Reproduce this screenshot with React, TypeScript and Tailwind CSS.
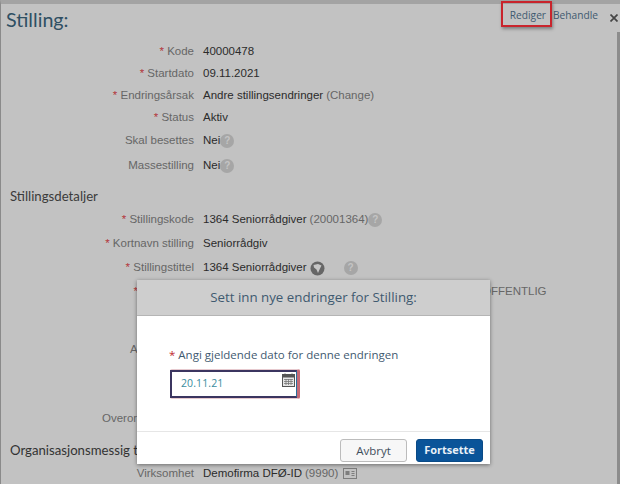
const sans = "font-['Liberation_Sans',Arial,sans-serif]";
const open = "font-['Open_Sans',sans-serif]";
const lato = "font-['Lato',sans-serif]";

type Row = {
  h: string;
  label?: string;
  req?: boolean;
  value?: string;
  muted?: string;
  icon?: 'help' | 'globe' | 'card';
  far?: boolean;
};

function Help({ className = '' }: { className?: string }) {
  return (
    <span
      className={`inline-flex h-[14px] w-[14px] items-center justify-center rounded-full bg-[#a6a6a6] text-[10px] font-bold leading-none text-[#c4c4c4] ${className}`}
    >
      ?
    </span>
  );
}

function Globe() {
  return (
    <svg width="15" height="15" viewBox="0 0 15 15" className="ml-[3px]">
      <circle cx="7.5" cy="7.5" r="7" fill="#666" />
      <path d="M3.5 4 L8 3 L11.5 4.5 L10 7.5 L8 12 L6.5 8.5 L4 6.5 Z" fill="#c6c6c6" />
    </svg>
  );
}

function CardIcon() {
  return (
    <svg width="14" height="11" viewBox="0 0 14 11" className="ml-[5px]">
      <rect x="0.5" y="0.5" width="13" height="10" fill="none" stroke="#7d7d7d" />
      <rect x="2.5" y="3" width="4" height="4" fill="#7d7d7d" />
      <path d="M8.5 3.5 H11.5 M8.5 5.5 H11.5 M8.5 7.5 H11.5" stroke="#7d7d7d" />
    </svg>
  );
}

function FormRow({ row }: { row: Row }) {
  return (
    <div className={`flex items-center text-[11.5px] ${row.h}`}>
      <div className={`w-[193px] shrink-0 text-right text-[#666] ${row.far ? 'pr-[56px]' : ''}`}>
        {row.req && <span className="text-[#b3353b]">* </span>}
        {row.label}
      </div>
      {row.value && (
        <div className={`flex items-center whitespace-nowrap pl-[9px] text-[#2b2b2b] ${row.far ? 'ml-[279px] text-[#666]' : ''}`}>
          {row.value}
          {row.muted && <span className="ml-[3px] text-[#666]">{row.muted}</span>}
          {row.icon === 'help' && <Help />}
          {row.icon === 'globe' && (
            <>
              <Globe />
              <Help className="ml-[19px]" />
            </>
          )}
          {row.icon === 'card' && <CardIcon />}
        </div>
      )}
    </div>
  );
}

// labels cut off by the dialog: only the part left of it is visible
function CutLabel({ h, pad, text }: { h: string; pad: string; text: string }) {
  return <div className={`flex items-center text-[11.5px] text-[#666] ${h} ${pad}`}>{text}</div>;
}

const top: Row[] = [
  { h: 'h-[22px]', label: 'Kode', req: true, value: '40000478' },
  { h: 'h-[22px]', label: 'Startdato', req: true, value: '09.11.2021' },
  { h: 'h-[22px]', label: 'Endringsårsak', req: true, value: 'Andre stillingsendringer', muted: '(Change)' },
  { h: 'h-[22px]', label: 'Status', req: true, value: 'Aktiv' },
  { h: 'h-[24px]', label: 'Skal besettes', value: 'Nei', icon: 'help' },
  { h: 'h-[25px]', label: 'Massestilling', value: 'Nei', icon: 'help' },
];

const details: Row[] = [
  { h: 'h-[25px]', label: 'Stillingskode', req: true, value: '1364 Seniorrådgiver', muted: '(20001364)', icon: 'help' },
  { h: 'h-[24px]', label: 'Kortnavn stilling', req: true, value: 'Seniorrådgiv' },
  { h: 'h-[24px]', label: 'Stillingstittel', req: true, value: '1364 Seniorrådgiver', icon: 'globe' },
  { h: 'h-[24px]', req: true, value: 'OFFENTLIG', far: true },
];

export default function App() {
  return (
    <div className={`relative h-[485px] w-[620px] overflow-hidden bg-white ${sans}`}>
      <div className="flex h-[484px] flex-col border-l border-t-[4px] border-l-[#8a8a8a] border-t-[#a3a3a3] bg-[#c2c2c2]">
        <div className="flex h-[28px] w-[616px] shrink-0 items-start justify-between">
          <h1 className={`pl-[5px] text-[19.7px] leading-[32px] text-[#2f4f63] ${lato}`}>Stilling:</h1>
          <div className={`flex items-start gap-[7px] pt-[3px] text-[10.2px] leading-[16px] text-[#3f5a70] ${open}`}>
            <span>Rediger</span>
            <span>Behandle</span>
            <svg width="8" height="8" viewBox="0 0 8 8" className="ml-[5px] mr-[-1px] mt-[7px]">
              <path d="M0.5 0.5 L7.5 7.5 M7.5 0.5 L0.5 7.5" stroke="#444" strokeWidth="1.7" />
            </svg>
          </div>
        </div>

        <div className="pt-[9px]">
          {top.map((r) => (
            <FormRow key={r.value} row={r} />
          ))}
        </div>

        <h2 className={`pl-[9px] pt-[8px] text-[13.2px] leading-[20px] text-[#3b3b3b] ${lato}`}>Stillingsdetaljer</h2>
        <div className="pt-[1px]">
          {details.map((r) => (
            <FormRow key={r.value} row={r} />
          ))}
        </div>
        <CutLabel h="h-[91px]" pad="pl-[129px]" text="Ar" />
        <CutLabel h="h-[46px] pt-[3px]" pad="pl-[101px]" text="Overor" />

        <h2 className={`whitespace-nowrap pl-[9px] text-[13.2px] leading-[20px] text-[#333] ${lato}`}>Organisasjonsmessig t</h2>
        <div className="pt-[3px]">
          <FormRow row={{ h: 'h-[21px]', label: 'Virksomhet', value: 'Demofirma DFØ-ID', muted: '(9990)', icon: 'card' }} />
        </div>
      </div>

      {/* scrollbar edge on the right */}
      <div className="absolute right-0 top-[32px] h-[452px] w-[3px] bg-[#8c8c8c]" />

      {/* red annotation round Rediger */}
      <div className="absolute left-[501px] top-[1px] h-[26px] w-[51px] border-2 border-[#c9242c] shadow-[1px_2px_3px_rgba(0,0,0,0.35)]" />

      {/* dialog */}
      <div className={`absolute left-[137px] top-[280px] flex h-[184px] w-[353px] flex-col bg-white shadow-[0_1px_4px_rgba(0,0,0,0.45)] ${open}`}>
        <div className="flex h-[36px] shrink-0 items-center justify-center border-b border-[#b5b5b5] bg-[#cecece] text-[13.3px] text-[#3f5a70]">
          Sett inn nye endringer for Stilling:
        </div>
        <div className="flex-1 pl-[32px] pt-[30px]">
          <div className="text-[11.5px] leading-[18px] text-[#3f5a70]">
            <span className="text-[#c0272d]">* </span>Angi gjeldende dato for denne endringen
          </div>
          <div className="ml-[1px] mt-[5px] h-[30px] w-[130px] rounded-[2px] border-y border-r-[3px] border-y-[#e6c9ce] border-r-[#c46a76]">
            <div className="flex h-[28px] w-[127px] items-center justify-between border-2 border-r border-[#3b3560] border-r-[#2a6f9c] pl-[9px] pr-[1px]">
              <span className="text-[10.5px] tracking-[0.1px] text-[#3a8c9e]">20.11.21</span>
              <svg width="13" height="14" viewBox="0 0 13 14" className="mb-[8px]">
                <rect x="0.5" y="1.5" width="12" height="12" fill="#e6e6e6" stroke="#555" />
                <rect x="0.5" y="1.5" width="12" height="3" fill="#555" />
                <path d="M3 0.5 V3 M10 0.5 V3" stroke="#555" />
                <path d="M2 6.5 H11 M2 8.5 H11 M2 10.5 H11 M4 6 V12 M6.5 6 V12 M9 6 V12" stroke="#777" strokeWidth="0.8" />
              </svg>
            </div>
          </div>
        </div>
        <div className="flex h-[33px] shrink-0 items-start justify-end gap-[9px] border-t border-[#e6e6e6] pr-[7px] pt-[7px] text-[11.5px]">
          <button className="h-[23px] w-[67px] rounded-[3px] border border-[#bcbcbc] bg-[#f7f7f7] text-[#3f4f5c]">Avbryt</button>
          <button className="h-[23px] w-[67px] rounded-[3px] border border-[#0a4a86] bg-[#0a5499] text-[11px] font-bold text-[#e9f1f8]">Fortsette</button>
        </div>
      </div>
    </div>
  );
}
